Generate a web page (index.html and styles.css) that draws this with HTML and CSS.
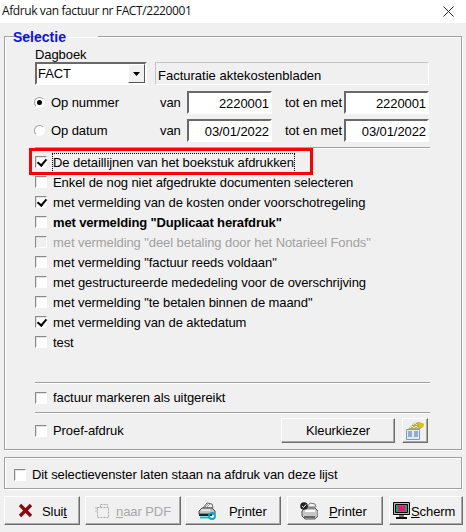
FILE: index.html
```html
<!DOCTYPE html>
<html lang="nl">
<head>
<meta charset="utf-8">
<title>Afdruk van factuur</title>
<link rel="stylesheet" href="styles.css">
</head>
<body>
<header class="titlebar">
  <span class="title">Afdruk van factuur nr FACT/2220001</span>
  <svg class="close" width="11" height="11" viewBox="0 0 11 11"><path d="M.5.5l10 10M10.5.5l-10 10" stroke="#222" fill="none"/></svg>
</header>
<main class="dialog">
  <fieldset class="group selectie">
    <legend class="legend">Selectie</legend>
    <div class="dagboek-label">Dagboek</div>
    <div class="dagboek-row">
      <div class="combo"><span class="combo-value">FACT</span><span class="combo-btn"><svg width="7" height="4" viewBox="0 0 7 4"><path d="M0 0h7L3.5 4z" fill="#000"/></svg></span></div>
      <div class="readonly">Facturatie aktekostenbladen</div>
    </div>
    <div class="range-row">
      <span class="radio on"></span><span class="range-label">Op nummer</span>
      <span class="van">van</span><span class="field">2220001</span>
      <span class="tot">tot en met</span><span class="field">2220001</span>
    </div>
    <div class="range-row second">
      <span class="radio"></span><span class="range-label">Op datum</span>
      <span class="van">van</span><span class="field">03/01/2022</span>
      <span class="tot">tot en met</span><span class="field">03/01/2022</span>
    </div>
    <div class="sep first-sep"></div>
    <div class="checks">
      <div class="check-row focus-row"><span class="box checked"></span><span class="check-text focus-text">De detaillijnen van het boekstuk afdrukken</span><span class="highlight"></span></div>
      <div class="check-row"><span class="box"></span><span class="check-text">Enkel de nog niet afgedrukte documenten selecteren</span></div>
      <div class="check-row"><span class="box checked"></span><span class="check-text">met vermelding van de kosten onder voorschotregeling</span></div>
      <div class="check-row bold"><span class="box"></span><span class="check-text">met vermelding "Duplicaat herafdruk"</span></div>
      <div class="check-row disabled"><span class="box"></span><span class="check-text">met vermelding "deel betaling door het Notarieel Fonds"</span></div>
      <div class="check-row"><span class="box"></span><span class="check-text">met vermelding "factuur reeds voldaan"</span></div>
      <div class="check-row"><span class="box"></span><span class="check-text">met gestructureerde mededeling voor de overschrijving</span></div>
      <div class="check-row"><span class="box"></span><span class="check-text">met vermelding "te betalen binnen de maand"</span></div>
      <div class="check-row"><span class="box checked"></span><span class="check-text">met vermelding van de aktedatum</span></div>
      <div class="check-row"><span class="box"></span><span class="check-text">test</span></div>
    </div>
    <div class="sep lower-sep"></div>
    <div class="check-row marker-row"><span class="box"></span><span>factuur markeren als uitgereikt</span></div>
    <div class="sep"></div>
    <div class="proef-row">
      <span class="box"></span><span class="proef-label">Proef-afdruk</span>
      <button class="btn kleur">Kleurkiezer</button>
      <button class="btn tool">
        <svg width="20" height="19" viewBox="0 0 20 19"><path d="M1.500 8.500h13v10h-13z" fill="#dfeaf5" stroke="#7f9db9"/><path d="M3 11h4M3 13h4M3 15h4M9 11h4M9 13h4M9 15h4" stroke="#4a6fa5"/><path d="M3 8l6-6 5-1 5 2-1 3-3 2H5z" fill="#b9a860"/><path d="M5 7l2-2 2 2 2-2 2 2M8 4l2-2 2 2" stroke="#ece6c0" fill="none"/><path d="M13 1l6 2-1 3-4 1z" fill="#d8c400"/></svg>
      </button>
    </div>
  </fieldset>
  <section class="group keep">
    <span class="box"></span><span>Dit selectievenster laten staan na afdruk van deze lijst</span>
  </section>
  <footer class="actions">
    <button class="btn act sluit">
      <svg width="15" height="15" viewBox="0 0 15 15"><path d="M2 2l11 11M13 2L2 13" stroke="#8b0a12" stroke-width="3.400" fill="none"/></svg>
      <span class="act-label">Slui<u>t</u></span>
    </button>
    <button class="btn act pdf" disabled>
      <svg width="17" height="17" viewBox="0 0 17 17"><path d="M3.500 5.500h11v10h-11zM6.500 5.500v-3h7v3" fill="none" stroke="#a8a8a8" stroke-dasharray="2 1"/><path d="M1 6h3M1 9h2" stroke="#b5b5b5"/></svg>
      <span class="act-label"><u>n</u>aar PDF</span>
    </button>
    <button class="btn act printer">
      <svg width="18" height="18" viewBox="0 0 18 18"><path d="M5 6l4-5 5 1 1 4z" fill="#f2f2f2" stroke="#666"/><path d="M7 5l3-3M9 5l3-3" stroke="#999"/><path d="M1 9l3-3h10l3 3v3H1z" fill="#c4c4c4" stroke="#444"/><path d="M3 8h9" stroke="#fff"/><path d="M1 12h13v2H1z" fill="#222"/><path d="M2 15.500h9" stroke="#0cc" stroke-width="2"/><circle cx="14" cy="14" r="3" fill="none" stroke="#06a9c4" stroke-width="1.800"/></svg>
      <span class="act-label">P<u>r</u>inter</span>
    </button>
    <button class="btn act printer two">
      <svg width="18" height="18" viewBox="0 0 18 18"><path d="M7 5l3-4 5 1 1 3z" fill="#f2f2f2" stroke="#777"/><path d="M2 9l3-3h10l3 3v5l-3 3H5l-3-3z" fill="#c6c6c6" stroke="#555"/><path d="M5 9h10" stroke="#fff" stroke-width="2"/><path d="M4 14h11v2H4z" fill="#666"/><circle cx="4" cy="4" r="3.800" fill="#222"/><path d="M2 4l1.500 1.500L6 2.500" stroke="#fff" fill="none"/></svg>
      <span class="act-label"><u>P</u>rinter</span>
    </button>
    <button class="btn act scherm">
      <svg width="17" height="18" viewBox="0 0 17 18"><path d="M.5.500h16v12H.5z" fill="#b8b8b8" stroke="#000"/><path d="M2.500 2.500h12v8h-12z" fill="#00b060" stroke="#000"/><path d="M5 4h7v5H5z" fill="#e0187a"/><path d="M6 13h5v2H6z" fill="#777"/><path d="M3 15h11v2H3z" fill="#111"/></svg>
      <span class="act-label"><u>S</u>cherm</span>
    </button>
  </footer>
</main>
</body>
</html>
```
FILE: styles.css
```css
* { box-sizing: border-box; }
html, body { margin: 0; padding: 0; }
body {
  width: 466px;
  height: 532px;
  overflow: hidden;
  background: #f0f0f0;
  color: #000;
  font: 13px/16px "Liberation Sans", Arial, sans-serif;
  letter-spacing: -.08px;
}
.titlebar {
  height: 23px;
  background: #fff;
  display: flex;
  align-items: center;
  justify-content: space-between;
  padding: 0 12px 2px 2px;
}
.title { font: 12px/16px "Open Sans", "Noto Sans", sans-serif; letter-spacing: -.4px; color: #111; }
.close { margin-top: 1px; }
.dialog { padding: 5px 4px 0; }
.group {
  border: 1px solid #a0a0a0;
  box-shadow: inset 1px 1px 0 #fff, 1px 1px 0 #fff;
  margin: 0;
}
.selectie {
  width: 458px;
  height: 422px;
  padding: 3px 0 0 30px;
  min-width: 0;
}
.legend {
  margin-left: 6px;
  position: relative;
  left: -30px;
  top: 1px;
  padding: 0 2px;
  color: #1010f0;
  letter-spacing: 0;
  font: bold 14px/16px "Liberation Sans", Arial, sans-serif;
}
.dagboek-label { height: 15px; }
.dagboek-row { display: flex; gap: 8px; height: 23px; width: 394px; }
.combo {
  width: 112px;
  display: flex;
  justify-content: space-between;
  background: #fff;
  border: 2px solid;
  border-color: #696969 #fff #fff #696969;
  line-height: 19px;
  padding-left: 1px;
}
.combo-btn {
  width: 17px;
  height: 19px;
  background: #f0f0f0;
  border: 1px solid;
  border-color: #fff #555 #555 #fff;
  display: flex;
  align-items: center;
  justify-content: center;
}
.readonly {
  flex: 1;
  border: 1px solid;
  border-color: #c4c4c4 #fff #fff #c4c4c4;
  padding: 1px 0 0 2px;
  line-height: 23px;
  letter-spacing: 0;
  background: #f0f0f0;
}
.range-row {
  display: flex;
  align-items: center;
  height: 23px;
  width: 394px;
  margin-top: 6px;
}
.range-row.second { margin-top: 5px; }
.radio {
  width: 11px;
  height: 11px;
  border-radius: 50%;
  border: 1px solid #a0a0a0;
  border-right-color: #fff;
  border-bottom-color: #fff;
  background: #fff;
  margin: 0 6px 0 -1px;
  flex: none;
  display: flex;
  align-items: center;
  justify-content: center;
}
.radio.on::after {
  content: "";
  width: 5px;
  height: 5px;
  border-radius: 50%;
  background: #000;
}
.range-label { width: 109px; }
.van { width: 27px; }
.field {
  width: 85px;
  height: 23px;
  background: #fff;
  border: 2px solid;
  border-color: #696969 #fff #fff #696969;
  text-align: right;
  padding-right: 1px;
  line-height: 21px;
  flex: none;
}
.tot { width: 72px; padding-left: 13px; white-space: nowrap; flex: none; }
.sep {
  height: 2px;
  width: 395px;
  background: #a0a0a0;
  border-bottom: 1px solid #fff;
}
.first-sep { margin-top: 5px; }
.checks { margin-top: 3px; }
.check-row {
  display: flex;
  align-items: center;
  height: 20px;
  position: relative;
}
.check-text { margin-top: 2px; }
.box {
  width: 12px;
  height: 12px;
  flex: none;
  margin: 0 6px 0 0;
  background: #fff;
  border: 1px solid;
  border-color: #8a8a8a #fff #fff #8a8a8a;
  box-shadow: inset 1px 1px 0 #e3e3e3;
  position: relative;
}
.box.checked::after {
  content: "";
  position: absolute;
  left: 3px;
  top: 0;
  width: 4px;
  height: 7px;
  border: solid #000;
  border-width: 0 2px 2px 0;
  transform: rotate(40deg);
}
.bold { font-weight: bold; letter-spacing: -.15px; }
.disabled { color: #a0a0a0; }
.disabled .box { background: #f0f0f0; }
.focus-text { outline: 1px dotted #000; padding: 1px 0; }
.highlight {
  position: absolute;
  left: -6px;
  top: -4px;
  width: 284px;
  height: 27px;
  border: 3px solid #f00;
  pointer-events: none;
}
.lower-sep { margin-top: 30px; }
.marker-row { height: 28px; }
.proef-row {
  display: flex;
  align-items: center;
  height: 30px;
  width: 394px;
  margin-top: 1px;
}
.proef-row .box { margin-top: 2px; }
.proef-label { width: 228px; margin-top: 2px; }
.btn {
  background: #f0f0f0;
  border: 1px solid;
  border-color: #fff #6d6d6d #6d6d6d #fff;
  box-shadow: inset -1px -1px 0 #a8a8a8;
  font: inherit;
  letter-spacing: inherit;
  color: #000;
  padding: 0;
  display: flex;
  align-items: center;
  justify-content: center;
}
.kleur { width: 114px; height: 25px; padding-top: 1px; }
.tool { width: 26px; height: 25px; margin-left: 7px; }
.keep {
  display: flex;
  align-items: center;
  width: 458px;
  height: 32px;
  margin-top: 7px;
  padding: 4px 0 0 9px;
}
.keep .box { margin-right: 6px; }
.actions {
  display: flex;
  margin-top: 7px;
  height: 29px;
}
.act { height: 29px; flex: none; justify-content: flex-start; }
.act-label { margin-top: 2px; }
.act u { text-decoration-thickness: 1px; }
.sluit { width: 76px; margin-right: 5px; padding-left: 13px; gap: 9px; }
.pdf { width: 96px; margin-right: 4px; padding-left: 8px; gap: 5px; color: #a8a8a8; }
.printer { width: 96px; margin-right: 6px; padding-left: 12px; gap: 13px; }
.printer.two { gap: 11px; }
.scherm { width: 74px; padding-left: 3px; gap: 1px; }
```
